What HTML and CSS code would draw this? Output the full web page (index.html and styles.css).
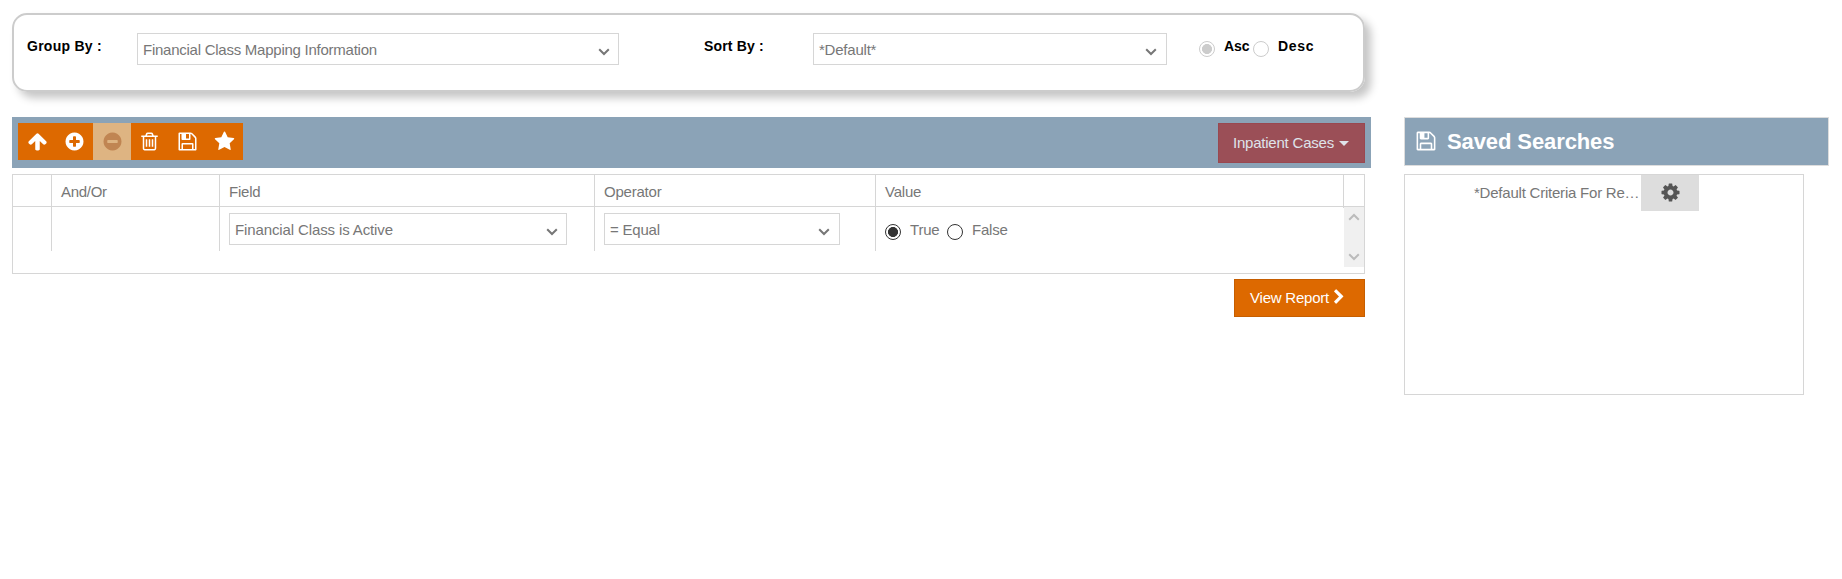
FILE: index.html
```html
<!DOCTYPE html>
<html lang="en">
<head>
<meta charset="utf-8">
<title>Report Search</title>
<link rel="stylesheet" href="styles.css">
</head>
<body>
<svg class="defs" width="0" height="0">
  <symbol id="floppy" viewBox="0 0 1792 1792"><path d="M512 1536h768v-384h-768v384zm896 0h128v-896q0-14-10-38.5t-20-34.5l-281-281q-10-10-34-20t-39-10v416q0 40-28 68t-68 28h-576q-40 0-68-28t-28-68v-416h-128v1280h128v-416q0-40 28-68t68-28h832q40 0 68 28t28 68v416zm-384-928v-320q0-13-9.5-22.5t-22.5-9.5h-192q-13 0-22.5 9.5t-9.5 22.5v320q0 13 9.5 22.5t22.5 9.5h192q13 0 22.5-9.5t9.5-22.5zm640 32v928q0 40-28 68t-68 28h-1344q-40 0-68-28t-28-68v-1344q0-40 28-68t68-28h928q40 0 88 20t76 48l280 280q28 28 48 76t20 88z"/></symbol>
  <symbol id="chev" viewBox="0 0 12 8"><path d="M1.2 1.2L6 6L10.800 1.2" fill="none" stroke="currentColor" stroke-width="2"/></symbol>
</svg>
<div class="page">
  <main class="main">
    <section class="panel">
      <span class="label group-label">Group By :</span>
      <div class="select group-select"><span>Financial Class Mapping Information</span><svg class="chev"><use href="#chev"/></svg></div>
      <span class="label sort-label">Sort By :</span>
      <div class="select sort-select"><span>*Default*</span><svg class="chev"><use href="#chev"/></svg></div>
      <i class="radio on off-state asc-radio"></i><span class="label asc">Asc</span>
      <i class="radio off-state desc-radio"></i><span class="label desc">Desc</span>
    </section>
    <section class="toolbar">
      <div class="tools">
        <button class="tool first"><svg viewBox="0 0 1792 1792"><path d="M1675 971q0 51-37 90l-75 75q-38 38-91 38-54 0-90-38l-294-293v704q0 52-37.500 84.500t-90.500 32.500h-128q-53 0-90.500-32.500t-37.500-84.500v-704l-294 293q-36 38-90 38t-90-38l-75-75q-38-38-38-90 0-53 38-91l651-651q35-37 90-37 54 0 91 37l651 651q37 39 37 91z"/></svg></button>
        <button class="tool"><svg viewBox="0 0 1792 1792"><path d="M1344 960v-128q0-26-19-45t-45-19h-256v-256q0-26-19-45t-45-19h-128q-26 0-45 19t-19 45v256h-256q-26 0-45 19t-19 45v128q0 26 19 45t45 19h256v256q0 26 19 45t45 19h128q26 0 45-19t19-45v-256h256q26 0 45-19t19-45zm320-64q0 209-103 385.500t-279.500 279.500-385.500 103-385.500-103-279.500-279.500-103-385.500 103-385.500 279.500-279.500 385.500-103 385.500 103 279.500 279.500 103 385.500z"/></svg></button>
        <button class="tool disabled"><svg viewBox="0 0 1792 1792"><path d="M1344 960v-128q0-26-19-45t-45-19h-768q-26 0-45 19t-19 45v128q0 26 19 45t45 19h768q26 0 45-19t19-45zm320-64q0 209-103 385.500t-279.500 279.500-385.500 103-385.500-103-279.500-279.500-103-385.500 103-385.500 279.500-279.500 385.500-103 385.500 103 279.500 279.500 103 385.500z"/></svg></button>
        <button class="tool"><svg viewBox="0 0 1792 1792"><path d="M704 736v576q0 14-9 23t-23 9h-64q-14 0-23-9t-9-23v-576q0-14 9-23t23-9h64q14 0 23 9t9 23zm256 0v576q0 14-9 23t-23 9h-64q-14 0-23-9t-9-23v-576q0-14 9-23t23-9h64q14 0 23 9t9 23zm256 0v576q0 14-9 23t-23 9h-64q-14 0-23-9t-9-23v-576q0-14 9-23t23-9h64q14 0 23 9t9 23zm128 724v-948h-896v948q0 22 7 40.500t14.500 27 10.500 8.500h832q3 0 10.500-8.500t14.500-27 7-40.500zm-672-1076h448l-48-117q-7-9-17-11h-317q-10 2-17 11zm928 32v64q0 14-9 23t-23 9h-96v948q0 83-47 143.500t-113 60.500h-832q-66 0-113-58.500t-47-141.500v-952h-96q-14 0-23-9t-9-23v-64q0-14 9-23t23-9h309l70-167q15-37 54-63t79-26h320q40 0 79 26t54 63l70 167h309q14 0 23 9t9 23z"/></svg></button>
        <button class="tool"><svg><use href="#floppy"/></svg></button>
        <button class="tool"><svg viewBox="0 0 1792 1792"><path d="M1728 647q0 22-26 48l-363 354 86 500q1 7 1 20 0 21-10.500 35.500t-30.500 14.500q-19 0-40-12l-449-236-449 236q-22 12-40 12-21 0-31.500-14.500t-10.500-35.500q0-6 2-20l86-500-364-354q-25-27-25-48 0-37 56-46l502-73 225-455q19-41 49-41t49 41l225 455 502 73q56 9 56 46z"/></svg></button>
      </div>
      <button class="cases"><span>Inpatient Cases</span><i class="caret"></i></button>
    </section>
    <section class="grid">
      <div class="row head">
        <div class="cell"></div><div class="cell andor">And/Or</div><div class="cell">Field</div><div class="cell">Operator</div><div class="cell">Value</div><div class="cell"></div>
      </div>
      <div class="row body">
        <div class="cell"></div>
        <div class="cell"></div>
        <div class="cell"><div class="select field-select"><span>Financial Class is Active</span><svg class="chev"><use href="#chev"/></svg></div></div>
        <div class="cell"><div class="select op-select"><span>= Equal</span><svg class="chev"><use href="#chev"/></svg></div></div>
        <div class="cell value"><i class="radio on"></i><span class="true">True</span><i class="radio"></i><span class="false">False</span></div>
        <div class="scroll"><svg class="chev up"><use href="#chev"/></svg><svg class="chev"><use href="#chev"/></svg></div>
      </div>
    </section>
    <button class="view"><span>View Report</span><svg viewBox="0 0 1792 1792"><path d="M1363 877l-742 742q-19 19-45 19t-45-19l-166-166q-19-19-19-45t19-45l531-531-531-531q-19-19-19-45t19-45l166-166q19-19 45-19t45 19l742 742q19 19 19 45t-19 45z"/></svg></button>
  </main>
  <aside class="side">
    <h2 class="title"><svg><use href="#floppy"/></svg><span>Saved Searches</span></h2>
    <div class="list">
      <div class="item">
        <span class="name">*Default Criteria For Re…</span>
        <button class="gear"><svg viewBox="0 0 1792 1792"><path d="M1152 896q0-106-75-181t-181-75-181 75-75 181 75 181 181 75 181-75 75-181zm512-109v222q0 12-8 23t-20 13l-185 28q-19 54-39 91 35 50 107 138 10 12 10 25t-9 23q-27 37-99 108t-94 71q-12 0-26-9l-138-108q-44 23-91 38-16 136-29 186-7 28-36 28h-222q-14 0-24.500-8.500t-11.500-21.500l-28-184q-49-16-90-37l-141 107q-10 9-25 9-14 0-25-11-126-114-165-168-7-10-7-23 0-12 8-23 15-21 51-66.500t54-70.500q-27-50-41-99l-183-27q-13-2-21-12.500t-8-23.500v-222q0-12 8-23t19-13l186-28q14-46 39-92-40-57-107-138-10-12-10-24 0-10 9-23 26-36 98.500-107.500t94.500-71.500q13 0 26 10l138 107q44-23 91-38 16-136 29-186 7-28 36-28h222q14 0 24.500 8.500t11.500 21.500l28 184q49 16 90 37l142-107q9-9 24-9 13 0 25 10 129 119 165 170 7 8 7 22 0 12-8 23-15 21-51 66.500t-54 70.500q26 50 41 98l183 28q13 2 21 12.500t8 23.500z"/></svg></button>
      </div>
    </div>
  </aside>
</div>
</body>
</html>
```
FILE: styles.css
```css
* { box-sizing: border-box; }
body {
  margin: 0;
  background: #fff;
  color: #777;
  font: 15px/20px "Liberation Sans", Arial, sans-serif;
  letter-spacing: -0.22px;
}
button {
  margin: 0;
  padding: 0;
  border: 0;
  font: inherit;
  letter-spacing: inherit;
  color: #fff;
}
svg { display: block; fill: currentColor; flex: none; }
.defs { position: absolute; }
.page { display: flex; align-items: flex-start; padding: 13px 0 0 12px; }
.main { width: 1359px; display: flex; flex-direction: column; }

.panel {
  width: 1353px;
  height: 79px;
  display: flex;
  align-items: flex-start;
  padding: 18px 0 0 13px;
  border: 2px solid #ccc;
  border-radius: 15px;
  box-shadow: 6px 6px 8px #c6c6c6;
}
.label {
  color: #000;
  font-weight: bold;
  font-size: 14px;
  letter-spacing: 0.25px;
  white-space: nowrap;
  margin-top: 3px;
}
.group-label { width: 110px; }
.sort-label { width: 109px; margin-left: 85px; letter-spacing: 0.15px; }
.asc { width: 29px; margin-left: 9px; letter-spacing: -0.1px; }
.desc { margin-left: 9px; letter-spacing: 0.7px; }

.select {
  height: 32px;
  display: flex;
  align-items: center;
  justify-content: space-between;
  padding: 2px 8px 0 5px;
  border: 1px solid #d6d6d6;
  background: #fff;
  white-space: nowrap;
}
.chev { width: 12px; height: 8px; color: #777; }
.select .chev { margin-top: 4px; }
.group-select { width: 482px; letter-spacing: -0.25px; }
.sort-select { width: 354px; padding-right: 9px; }
.field-select { width: 338px; letter-spacing: -0.12px; }
.op-select { width: 236px; padding-right: 9px; }

.radio {
  width: 16px;
  height: 16px;
  flex: none;
  border: 1px solid #333;
  border-radius: 50%;
  color: #333;
}
.radio.on { background: radial-gradient(circle, currentColor 4.700px, transparent 5.300px); }
.off-state { border-color: #ccc; color: #ccc; margin-top: 8px; }
.asc-radio { margin-left: 32px; }

.toolbar {
  height: 51px;
  margin-top: 25px;
  padding: 6px 6px 0;
  display: flex;
  align-items: flex-start;
  justify-content: space-between;
  background: #8ba3b7;
}
.tools { display: grid; grid-template-columns: 37px 38px 38px 37px 38px 37px; }
.tool {
  height: 37px;
  display: flex;
  align-items: center;
  justify-content: center;
  background: #dd6900;
}
.tool svg { width: 21px; height: 21px; }
.tool.first { padding-left: 2px; }
.disabled { background: #deb482; color: #c08552; }
.cases {
  width: 147px;
  height: 40px;
  display: flex;
  align-items: center;
  padding-left: 14px;
  border: 1px solid #994850;
  background: #9b4f57;
  color: #dfe3ea;
}
.caret {
  margin-left: 5px;
  border: 5px solid transparent;
  border-top-color: currentColor;
  border-bottom: 0;
}

.grid {
  width: 1353px;
  height: 100px;
  margin-top: 6px;
  border: 1px solid #d6d6d6;
}
.row { display: grid; grid-template-columns: 39px 168px 375px 281px 468px 20px; }
.cell { border-right: 1px solid #d6d6d6; padding-left: 9px; }
.head { height: 32px; line-height: 33px; border-bottom: 1px solid #d6d6d6; }
.head .cell:last-child { border: 0; }
.head .andor { letter-spacing: -0.3px; }
.body { height: 60px; }
.body .cell { height: 44px; padding-top: 6px; }
.body .value { display: flex; border: 0; }
.value .radio { margin-top: 11px; }
.true { width: 37px; margin: 7px 0 0 9px; }
.false { margin: 7px 0 0 9px; }
.scroll {
  height: 60px;
  display: flex;
  flex-direction: column;
  align-items: center;
  justify-content: space-between;
  padding: 6px 0;
  background: #f0f0f0;
}
.scroll .chev { color: #bbb; }
.scroll .up { transform: rotate(180deg); }

.view {
  width: 131px;
  height: 38px;
  margin: 5px 6px 0 0;
  align-self: flex-end;
  display: flex;
  align-items: center;
  padding-left: 15px;
  border: 1px solid #c65e00;
  background: #dd6900;
}
.view svg { width: 16px; height: 16px; margin: -2px 0 0 2px; }

.side { width: 425px; margin: 104px 0 0 33px; }
.title {
  height: 49px;
  margin: 0 0 8px;
  display: flex;
  align-items: center;
  padding-left: 10px;
  border: 1px solid #ddd;
  background: #8ba3b7;
  color: #fff;
  font-size: 22px;
  letter-spacing: -0.1px;
}
.title svg { width: 22px; height: 22px; margin: -2px 10px 0 0; }
.list { width: 400px; height: 221px; border: 1px solid #d6d6d6; }
.item { display: flex; padding-left: 69px; }
.name { width: 167px; padding-top: 8px; white-space: nowrap; }
.gear {
  width: 58px;
  height: 36px;
  display: flex;
  align-items: center;
  justify-content: center;
  padding-bottom: 2px;
  background: #ddd;
  color: #555;
}
.gear svg { width: 21px; height: 21px; }
```
